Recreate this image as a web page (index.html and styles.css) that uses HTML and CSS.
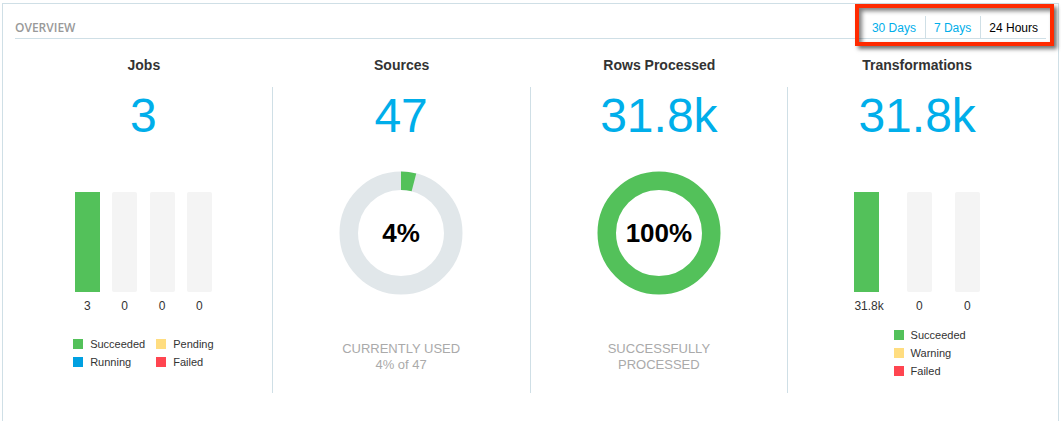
FILE: index.html
```html
<!DOCTYPE html>
<html lang="en">
<head>
<meta charset="utf-8">
<meta name="viewport" content="width=device-width, initial-scale=1">
<title>Overview</title>
<link rel="stylesheet" href="styles.css">
</head>
<body>
<main class="panel">
  <header class="panel-header">
    <h1 class="panel-title">OVERVIEW</h1>
    <nav class="range" aria-label="Time range">
      <button type="button" class="range-tab">30 Days</button>
      <button type="button" class="range-tab">7 Days</button>
      <button type="button" class="range-tab is-active" aria-pressed="true">24 Hours</button>
      <span class="range-highlight" aria-hidden="true"></span>
    </nav>
  </header>

  <div class="metrics">
    <section class="metric">
      <h2 class="metric-name">Jobs</h2>
      <div class="metric-body">
        <p class="metric-value">3</p>
        <div class="bars bars-jobs">
          <div class="bar-cell"><div class="bar bar-full"></div><span class="bar-label">3</span></div>
          <div class="bar-cell"><div class="bar"></div><span class="bar-label">0</span></div>
          <div class="bar-cell"><div class="bar"></div><span class="bar-label">0</span></div>
          <div class="bar-cell"><div class="bar"></div><span class="bar-label">0</span></div>
        </div>
        <ul class="legend legend-jobs">
          <li class="legend-item"><span class="swatch green"></span>Succeeded</li>
          <li class="legend-item"><span class="swatch yellow"></span>Pending</li>
          <li class="legend-item"><span class="swatch blue"></span>Running</li>
          <li class="legend-item"><span class="swatch red"></span>Failed</li>
        </ul>
      </div>
    </section>

    <section class="metric">
      <h2 class="metric-name">Sources</h2>
      <div class="metric-body">
        <p class="metric-value">47</p>
        <div class="donut">
          <svg class="donut-chart" viewBox="0 0 124 124" aria-hidden="true">
            <circle class="donut-track" cx="62" cy="62" r="52.25"/>
            <circle class="donut-fill" cx="62" cy="62" r="52.25" pathLength="100" stroke-dasharray="4 96" transform="rotate(-90 62 62)"/>
          </svg>
          <span class="donut-value">4%</span>
        </div>
        <p class="caption">CURRENTLY USED<br>4% of 47</p>
      </div>
    </section>

    <section class="metric">
      <h2 class="metric-name">Rows Processed</h2>
      <div class="metric-body">
        <p class="metric-value">31.8k</p>
        <div class="donut">
          <svg class="donut-chart" viewBox="0 0 124 124" aria-hidden="true">
            <circle class="donut-fill" cx="62" cy="62" r="52.25"/>
          </svg>
          <span class="donut-value">100%</span>
        </div>
        <p class="caption">SUCCESSFULLY<br>PROCESSED</p>
      </div>
    </section>

    <section class="metric">
      <h2 class="metric-name">Transformations</h2>
      <div class="metric-body">
        <p class="metric-value">31.8k</p>
        <div class="bars bars-transformations">
          <div class="bar-cell"><div class="bar bar-full"></div><span class="bar-label">31.8k</span></div>
          <div class="bar-cell"><div class="bar"></div><span class="bar-label">0</span></div>
          <div class="bar-cell"><div class="bar"></div><span class="bar-label">0</span></div>
        </div>
        <ul class="legend legend-transformations">
          <li class="legend-item"><span class="swatch green"></span>Succeeded</li>
          <li class="legend-item"><span class="swatch yellow"></span>Warning</li>
          <li class="legend-item"><span class="swatch red"></span>Failed</li>
        </ul>
      </div>
    </section>
  </div>
</main>
</body>
</html>
```
FILE: styles.css
```css
* {
  box-sizing: border-box;
}

body {
  margin: 0;
  padding: 3px 2px 0;
  min-height: 100vh;
  display: flex;
  flex-direction: column;
  background: #fff;
  color: #333;
  font-family: "Liberation Sans", Arial, sans-serif;
}

h1, h2, p, ul {
  margin: 0;
  padding: 0;
}

.panel {
  flex: 1;
  padding: 12px 12px 0;
  border: 1px solid #cfdfe6;
  border-bottom: 0;
}

.panel-header {
  display: flex;
  justify-content: space-between;
  height: 23px;
  border-bottom: 1px solid #cfdfe6;
}

.panel-title {
  color: #999;
  font: 600 12px/24px "Open Sans", sans-serif;
}

.range {
  position: relative;
  display: flex;
  gap: 1px;
}

.range-tab {
  padding: 0 8px;
  border: 0;
  border-left: 1px solid #cfdfe6;
  background: none;
  color: #00aeea;
  font: 12px/24px "Liberation Sans", Arial, sans-serif;
  cursor: pointer;
}

.range-tab:first-child {
  border-left: 0;
}

.range-tab.is-active {
  color: #000;
}

.range-highlight {
  position: absolute;
  inset: -12px -8px -8px -9px;
  border: 4px solid #ff2a00;
  box-shadow: 3px 3px 4px rgba(0, 0, 0, 0.55), inset 3px 3px 4px rgba(0, 0, 0, 0.5);
  pointer-events: none;
}

.metrics {
  display: grid;
  grid-template-columns: repeat(4, 1fr);
}

.metric {
  display: flex;
  flex-direction: column;
  text-align: center;
}

.metric-name {
  padding: 16px 0 12px;
  font-size: 14px;
  line-height: 20px;
}

.metric-body {
  flex: 1;
  display: flex;
  flex-direction: column;
  align-items: center;
  min-height: 306px;
  border-right: 1px solid #cfdfe6;
}

.metric:last-child .metric-body {
  border-right: 0;
}

.metric-value {
  color: #00aeea;
  font-size: 48px;
  line-height: 58px;
}

.bars {
  display: flex;
  padding-top: 47px;
}

.bars-jobs {
  width: 137px;
  justify-content: space-between;
}

.bars-transformations {
  gap: 23px;
}

.bar-cell {
  display: flex;
  flex-direction: column;
  gap: 6px;
}

.bar {
  width: 25px;
  height: 100px;
  border-radius: 2px;
  background: #f4f4f4;
}

.bar-full {
  border-radius: 0;
  background: #53c15a;
}

.bar-label {
  font-size: 12px;
  line-height: 16px;
}

.legend {
  list-style: none;
  font-size: 11px;
  line-height: 18px;
}

.legend-jobs {
  display: grid;
  grid-template-columns: auto auto;
  column-gap: 11px;
  margin-top: 21px;
}

.legend-transformations {
  margin: 12px 0 0 25px;
}

.legend-item {
  display: flex;
  align-items: center;
  gap: 7px;
}

.swatch {
  width: 10px;
  height: 10px;
}

.green { background: #53c15a; }
.yellow { background: #ffdd80; }
.blue { background: #00a0e1; }
.red { background: #ff4550; }

.donut {
  display: grid;
  place-items: center;
  padding-top: 26px;
}

.donut-chart,
.donut-value {
  grid-area: 1 / 1;
}

.donut-chart {
  width: 124px;
  height: 124px;
}

.donut-track,
.donut-fill {
  fill: none;
  stroke-width: 18.5;
}

.donut-track { stroke: #e1e7ea; }
.donut-fill { stroke: #53c15a; }

.donut-value {
  color: #000;
  font-size: 26px;
  font-weight: bold;
}

.caption {
  margin-top: 46px;
  color: #aaa;
  font-size: 13px;
  line-height: 16px;
}
```
